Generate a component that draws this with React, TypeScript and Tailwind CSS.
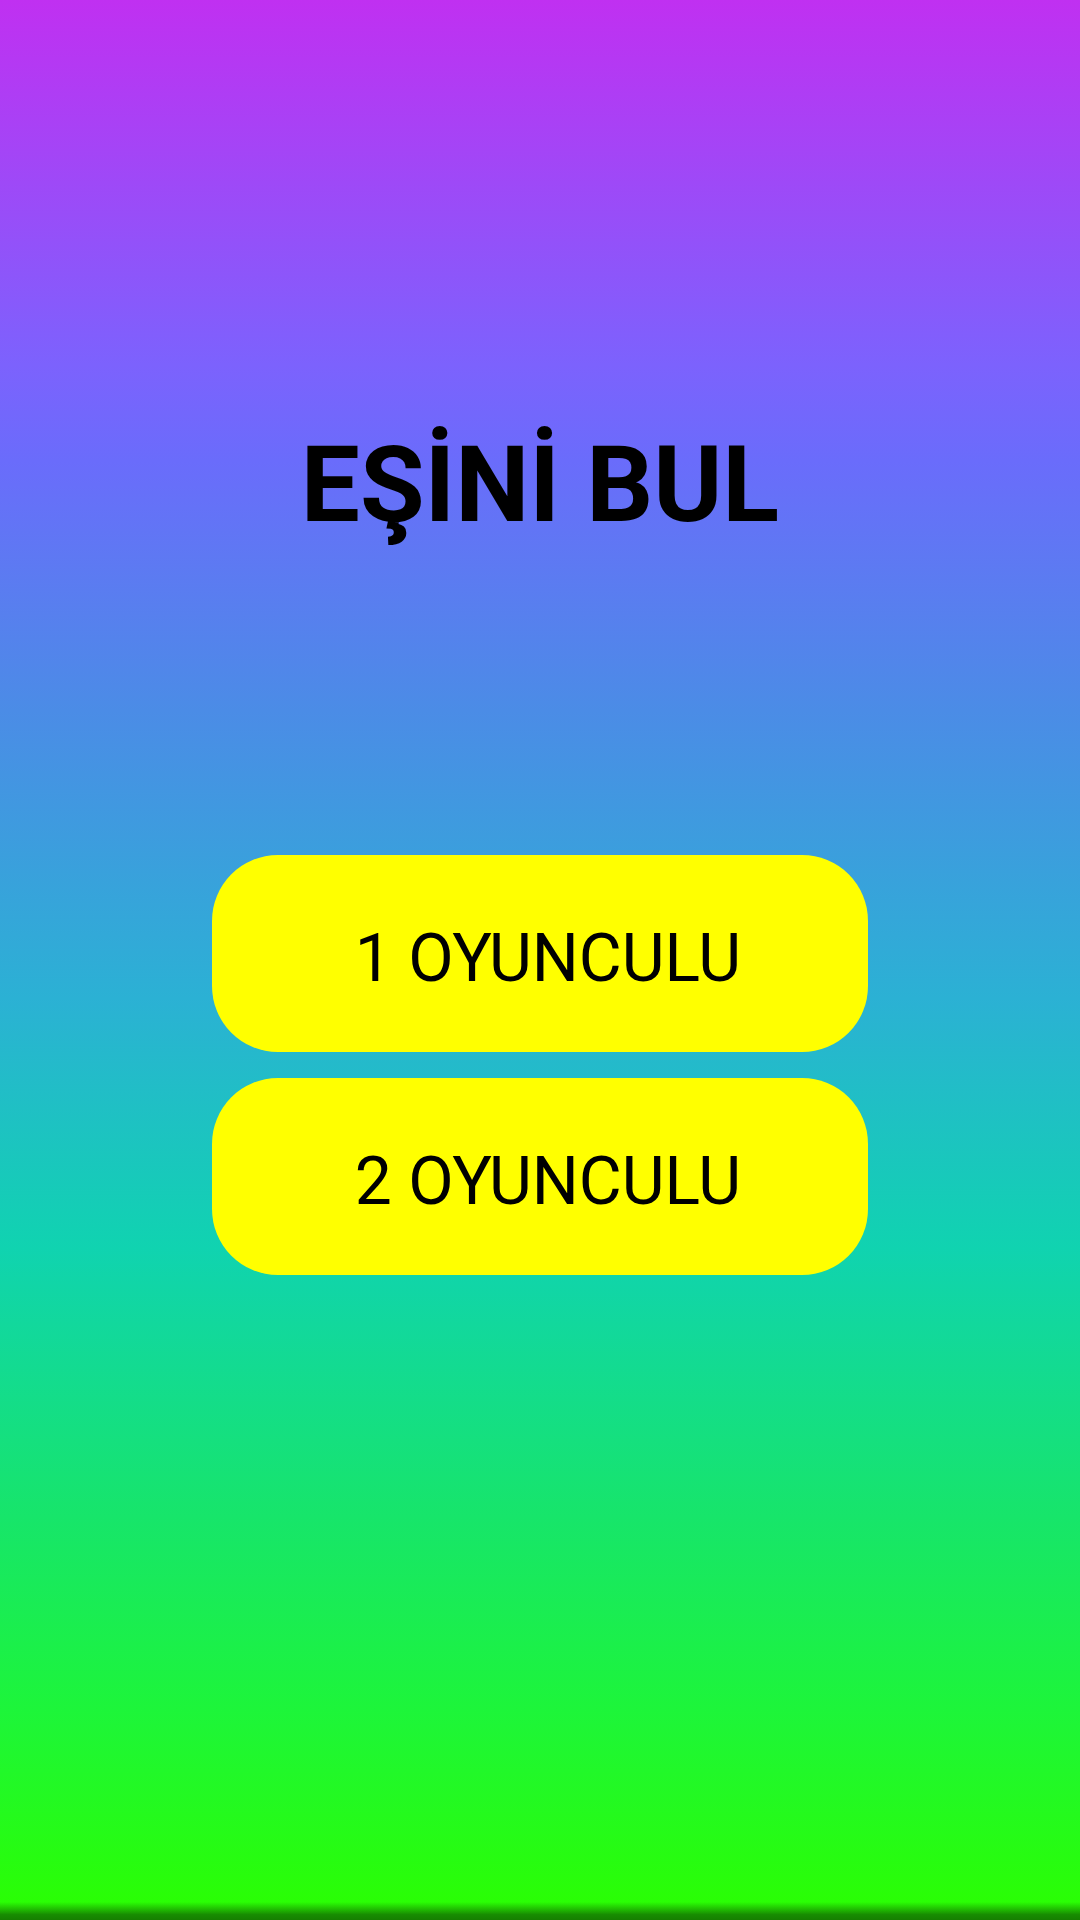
import React from 'react';

const App = () => {
  const modes = ['1 OYUNCULU', '2 OYUNCULU'];

  return (
    <div
      className="relative w-[1080px] h-[1920px] overflow-hidden flex flex-col items-center bg-[linear-gradient(180deg,#c030f1_0%,#7c62fd_19%,#6a6cfb_24%,#4b8ce6_37%,#2bb1d4_52%,#10d3b0_65%,#17e56a_79%,#1df53a_89%,#2bff00_100%)]"
      style={{ fontFamily: 'Roboto, "Noto Sans", sans-serif' }}
    >
      <h1 className="mt-[423px] text-[105px] leading-[1.2] font-bold text-black">EŞİNİ BUL</h1>

      <div className="mt-[306px] flex flex-col gap-[26px]">
        {modes.map((m) => (
          <button
            key={m}
            className="w-[656px] h-[197px] rounded-[66px] bg-[#ffff00] text-black text-[66px] pl-4 pt-[10px]"
          >
            {m}
          </button>
        ))}
      </div>

      {/* alt gölge */}
      <div className="absolute bottom-0 left-0 right-0 h-[18px] bg-[linear-gradient(180deg,rgba(0,0,0,0)_0%,rgba(0,0,0,0.45)_70%,rgba(0,0,0,0.5)_100%)]" />
    </div>
  );
};

export default App;
